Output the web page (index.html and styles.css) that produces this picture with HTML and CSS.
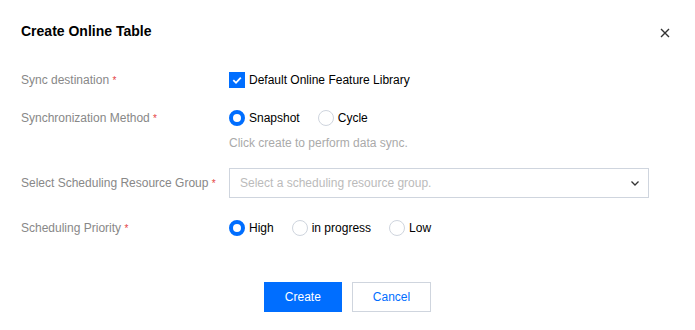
FILE: index.html
```html
<!DOCTYPE html>
<html lang="en">

<head>
  <meta charset="UTF-8">
  <meta name="viewport" content="width=device-width, initial-scale=1.0">
  <title>Create Online Table</title>
  <link rel="stylesheet" href="styles.css">
</head>

<body>

  <!-- dialog area -->
  <div class="dialog">

    <!-- dialog header -->
    <div class="dialog-header">
      <h3 class="dialog-title">Create Online Table</h3>
      <button class="dialog-close" aria-label="close">
        <svg width="10" height="10" viewBox="0 0 10 10">
          <path d="M1 1L9 9M9 1L1 9" stroke="#333" stroke-width="1.4" fill="none" />
        </svg>
      </button>
    </div>

    <!-- form area -->
    <div class="form">

      <div class="form-item item-sync">
        <label class="form-label">Sync destination <span class="required">*</span></label>
        <div class="form-control">
          <label class="check">
            <span class="check-box">
              <svg width="12" height="12" viewBox="0 0 12 12">
                <path d="M2.3 6.2L5 8.8L9.8 3.6" stroke="#fff" stroke-width="1.8" fill="none" />
              </svg>
            </span>
            Default Online Feature Library
          </label>
        </div>
      </div>

      <div class="form-item">
        <label class="form-label">Synchronization Method <span class="required">*</span></label>
        <div class="form-control">
          <div class="radio-group">
            <label class="radio"><span class="radio-dot checked"></span>Snapshot</label>
            <label class="radio"><span class="radio-dot"></span>Cycle</label>
          </div>
          <p class="form-help">Click create to perform data sync.</p>
        </div>
      </div>

      <div class="form-item">
        <label class="form-label">Select Scheduling Resource Group <span class="required">*</span></label>
        <div class="form-control">
          <div class="select">
            <span class="select-placeholder">Select a scheduling resource group.</span>
            <svg width="10" height="10" viewBox="0 0 10 10">
              <path d="M1.5 3.5L5 7L8.5 3.5" stroke="#333" stroke-width="1.3" fill="none" />
            </svg>
          </div>
        </div>
      </div>

      <div class="form-item">
        <label class="form-label">Scheduling Priority <span class="required">*</span></label>
        <div class="form-control">
          <div class="radio-group">
            <label class="radio"><span class="radio-dot checked"></span>High</label>
            <label class="radio"><span class="radio-dot"></span>in progress</label>
            <label class="radio"><span class="radio-dot"></span>Low</label>
          </div>
        </div>
      </div>

    </div>

    <!-- footer buttons -->
    <div class="dialog-footer">
      <button class="btn btn-primary">Create</button>
      <button class="btn">Cancel</button>
    </div>

  </div>

</body>

</html>
```

FILE: styles.css
```css
/* page */
body {
  margin: 0;
  padding: 0;
  background-color: #fff;
  font-family: "Liberation Sans", Arial, sans-serif;
  font-size: 12px;
  color: #000;
}

.dialog {
  width: 695px;
  height: 330px;
  box-sizing: border-box;
  padding: 20px 21px 0;
}

/* header */
.dialog-header {
  display: flex;
  justify-content: space-between;
  align-items: center;
  height: 22px;
}

.dialog-title {
  margin: 0;
  font-size: 14px;
  font-weight: bold;
  line-height: 22px;
}

.dialog-close {
  background: none;
  border: none;
  padding: 0;
  margin: 4px 3px 0 0;
  width: 12px;
  height: 12px;
  display: flex;
  align-items: center;
  justify-content: center;
  cursor: pointer;
}

/* form */
.form {
  margin-top: 23px;
}

.form-item {
  display: flex;
  margin-bottom: 15px;
}

.form-item.item-sync {
  margin-bottom: 8px;
}

.form-label {
  width: 208px;
  flex-shrink: 0;
  height: 30px;
  line-height: 30px;
  color: #888;
}

.required {
  color: #e54545;
  font-size: 10px;
  line-height: 1;
}

.form-control {
  flex: 1;
}

.check {
  display: flex;
  align-items: center;
  height: 30px;
}

.check-box {
  width: 16px;
  height: 16px;
  background-color: #006eff;
  display: flex;
  align-items: center;
  justify-content: center;
  margin-right: 4px;
}

.radio-group {
  display: flex;
  align-items: center;
  height: 30px;
}

.radio {
  display: flex;
  align-items: center;
  margin-right: 18px;
}

.radio-dot {
  width: 16px;
  height: 16px;
  box-sizing: border-box;
  border: 1px solid #cfd5de;
  border-radius: 50%;
  margin-right: 4px;
}

.radio-dot.checked {
  border: 4.5px solid #006eff;
}

.form-help {
  margin: 0;
  line-height: 20px;
  color: #aaa;
}

.select {
  width: 420px;
  height: 30px;
  box-sizing: border-box;
  border: 1px solid #cfd5de;
  display: flex;
  align-items: center;
  justify-content: space-between;
  padding: 0 8px 0 10px;
}

.select-placeholder {
  color: #bbb;
}

/* footer */
.dialog-footer {
  display: flex;
  justify-content: center;
  gap: 10px;
  margin-top: 39px;
}

.btn {
  height: 30px;
  padding: 0 20px;
  font-family: "Liberation Sans", Arial, sans-serif;
  font-size: 12px;
  background-color: #fff;
  border: 1px solid #cfd5de;
  color: #006eff;
  cursor: pointer;
}

.btn-primary {
  background-color: #006eff;
  border-color: #006eff;
  color: #fff;
}
```
